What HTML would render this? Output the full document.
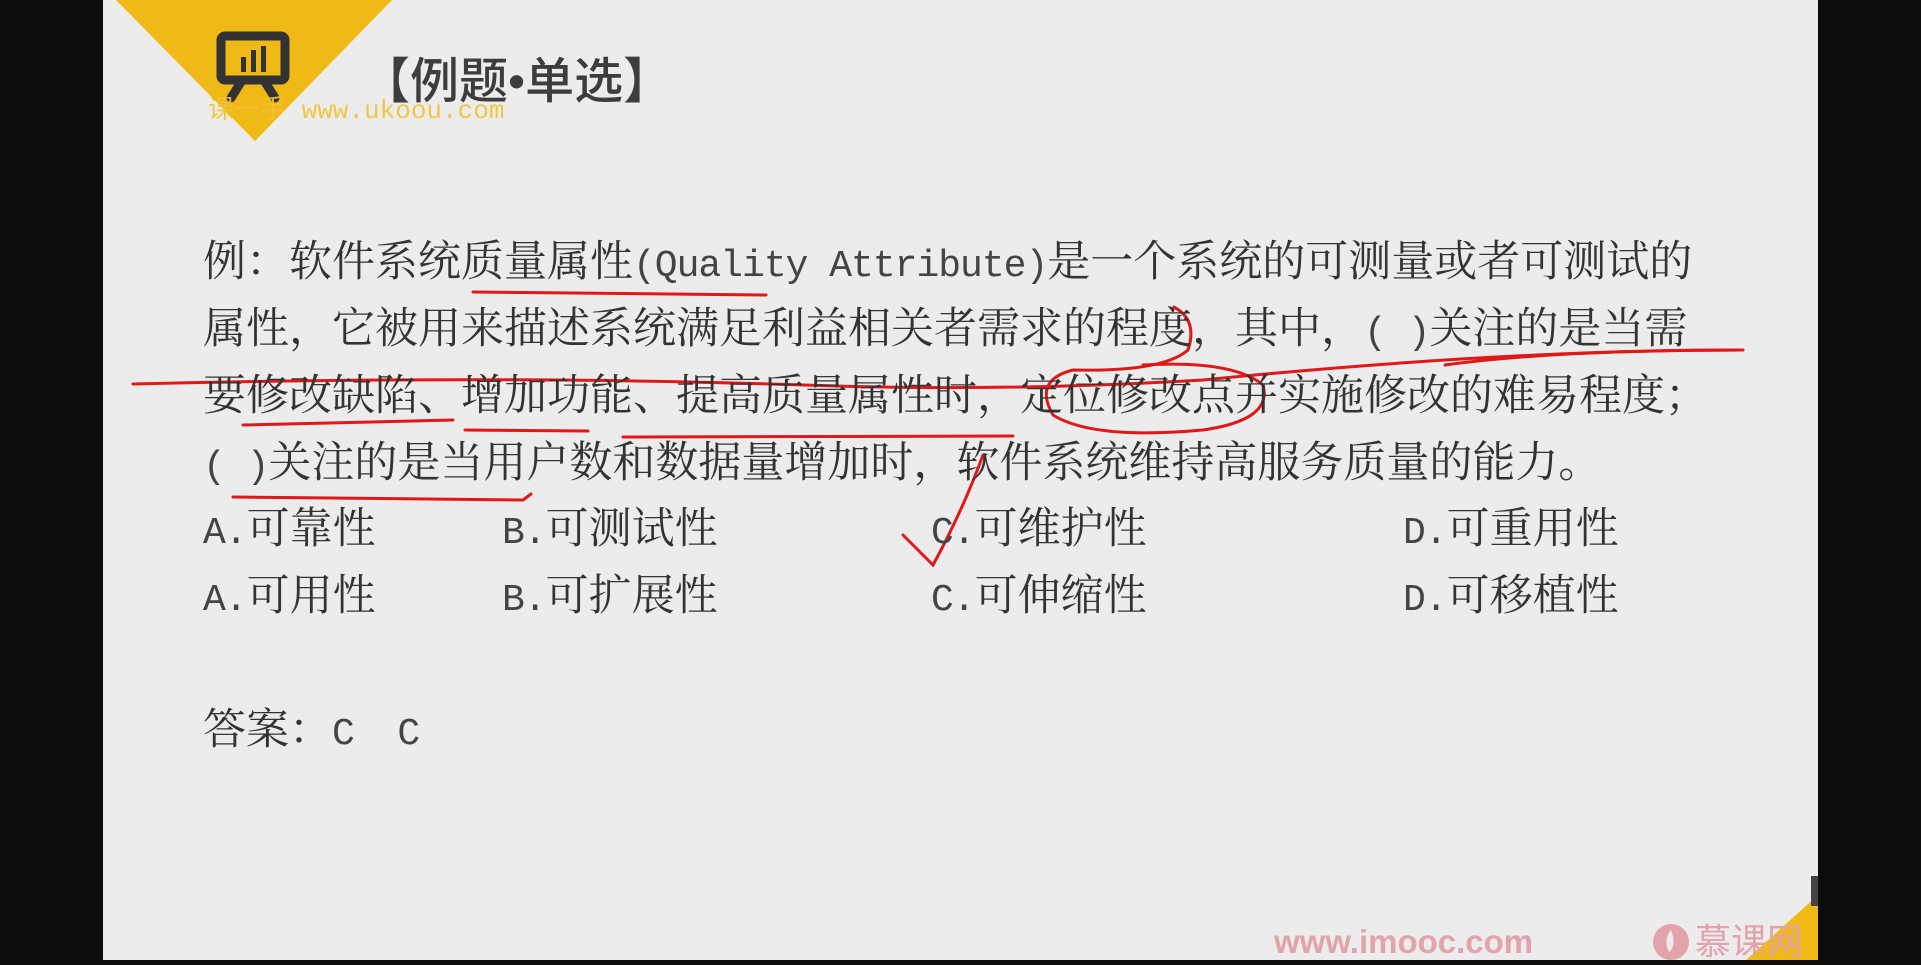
<!DOCTYPE html>
<html><head><meta charset="utf-8"><style>
body{margin:0;width:1921px;height:965px;background:#0c0d0b;overflow:hidden;position:relative}
#s{position:absolute;left:103px;top:0;width:1715px;height:960px;background:#ececec;overflow:hidden}
.t{position:absolute;left:100px;white-space:nowrap;font-family:"Liberation Mono","Noto Serif CJK SC",serif;font-size:43px;color:#333;line-height:60px}
.m{font-family:"Liberation Mono",monospace;font-size:38px;letter-spacing:-1px;color:#444}
</style></head><body>
<div id="s">
<svg width="1715" height="960" style="position:absolute;left:0;top:0">
<polygon points="13,0 289,0 152,141" fill="#f0b915"/>
<rect x="118" y="36" width="64" height="44" rx="4" fill="none" stroke="#333" stroke-width="9"/>
<rect x="138" y="57" width="5" height="15" fill="#333"/><rect x="148" y="50" width="5" height="22" fill="#333"/><rect x="158" y="46" width="5" height="26" fill="#333"/>
<path d="M138 82 L128 98 M162 82 L172 98" stroke="#333" stroke-width="9" stroke-linecap="round"/>
<polygon points="1643,960 1715,895 1715,960" fill="#f0b915"/>
<rect x="1708" y="876" width="7" height="30" fill="#444"/>
<circle cx="1568" cy="942" r="18" fill="#e3a3ab"/>
<path d="M1568 930 q-8 10 -2 22 q8 -6 2 -22z" fill="#ececec"/>
<g fill="none" stroke="#e01818" stroke-width="3" stroke-linecap="round">
<path d="M370 292 L663 295"/>
<path d="M30 384 Q400 375 700 385 Q900 392 1100 380 Q1400 350 1638 350"/>
<path d="M1342 365 Q1450 350 1640 350"/>
<path d="M140 425 L350 420"/>
<path d="M362 430 L485 431"/>
<path d="M520 437 L910 436"/>
<path d="M130 497 L420 500 L428 494"/>
<path d="M1071 307 Q1095 320 1085 350 Q1060 372 970 370 Q930 380 950 415 Q990 440 1100 430 Q1170 420 1160 385 Q1130 360 1040 365"/>
<path d="M800 535 Q820 555 830 565 Q860 510 880 455"/>
</g>
</svg>
<div style="position:absolute;left:258px;top:50px;font-family:'Liberation Sans','Noto Sans CJK SC',sans-serif;font-size:49px;font-weight:500;color:#3d3d3d;line-height:64px">【例题•单选】</div>
<div style="position:absolute;left:105px;top:96px;font-family:'Liberation Mono','Noto Sans CJK SC',monospace;font-size:26px;color:#f2c236;opacity:.9;line-height:30px">课一手 www.ukoou.com</div>
<div class="t" style="top:235px">例：软件系统质量属性<span class="m">(Quality Attribute)</span>是一个系统的可测量或者可测试的</div>
<div class="t" style="top:302px">属性，它被用来描述系统满足利益相关者需求的程度，其中，<span class="m">( )</span>关注的是当需</div>
<div class="t" style="top:369px">要修改缺陷、增加功能、提高质量属性时，定位修改点并实施修改的难易程度；</div>
<div class="t" style="top:436px"><span class="m">( )</span>关注的是当用户数和数据量增加时，软件系统维持高服务质量的能力。</div>
<div class="t" style="top:502px"><span class="m">A.</span>可靠性</div><div class="t" style="top:502px;left:399px"><span class="m">B.</span>可测试性</div><div class="t" style="top:502px;left:828px"><span class="m">C.</span>可维护性</div><div class="t" style="top:502px;left:1300px"><span class="m">D.</span>可重用性</div>
<div class="t" style="top:569px"><span class="m">A.</span>可用性</div><div class="t" style="top:569px;left:399px"><span class="m">B.</span>可扩展性</div><div class="t" style="top:569px;left:828px"><span class="m">C.</span>可伸缩性</div><div class="t" style="top:569px;left:1300px"><span class="m">D.</span>可移植性</div>
<div class="t" style="top:703px">答案：<span class="m">C &nbsp;C</span></div>
<div style="position:absolute;left:1171px;top:922px;font-family:'Liberation Sans',sans-serif;font-size:33px;font-weight:bold;color:#e3a3ab;line-height:40px">www.imooc.com</div>
<div style="position:absolute;left:1592px;top:920px;font-family:'Liberation Sans','Noto Sans CJK SC',sans-serif;font-size:36px;color:#e3a3ab;line-height:44px">慕课网</div>
</div>
</body></html>
